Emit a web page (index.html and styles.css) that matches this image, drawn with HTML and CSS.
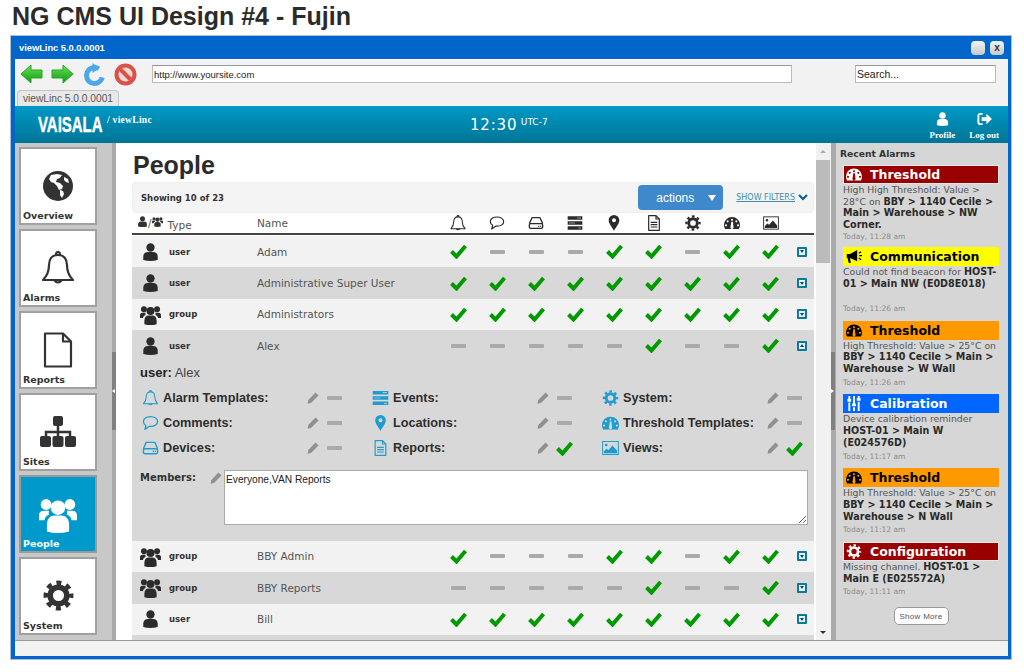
FILE: index.html
```html
<!DOCTYPE html>
<html lang="en">

<head>
    <meta charset="UTF-8" />
    <title>NG CMS UI Design #4 - Fujin</title>
    <link rel="stylesheet" href="styles.css">
</head>

<body>
    <svg class="defs" xmlns="http://www.w3.org/2000/svg">
        <symbol id="user" viewBox="0 0 20 20">
            <circle cx="10" cy="5" r="4.6" fill="currentColor" />
            <path d="M2 19v-4c0-3 2-5 5-5h6c3 0 5 2 5 5v4q-8 2-16 0z" fill="currentColor" />
        </symbol>
        <symbol id="group" viewBox="0 0 24 24">
            <g fill="currentColor">
                <circle cx="4.5" cy="6" r="3.4" />
                <circle cx="19.5" cy="6" r="3.4" />
                <path d="M0 16v-3c0-2 1-3 3-3h3.500c-.5 1-.5 2 0 2.500-2 .5-3 2-3 3.500zM24 16v-3c0-2-1-3-3-3h-3.500c.5 1 .5 2 0 2.500 2 .5 3 2 3 3.500z" />
                <circle cx="12" cy="8" r="4.6" />
                <path d="M5 23v-4c0-4 2-6 5-6h4c3 0 5 2 5 6v4q-7 2-14 0z" />
            </g>
        </symbol>
        <symbol id="bell" viewBox="0 0 32 34">
            <g fill="none" stroke="currentColor" stroke-width="2.2" stroke-linejoin="round">
                <path d="M16 4c-6 0-9 4-9 10 0 7-2 11-6 15h30c-4-4-6-8-6-15 0-6-3-10-9-10z" />
                <path d="M14 4q0-3 2-3t2 3" />
                <path d="M12 29q4 5 8 0" />
            </g>
        </symbol>
        <symbol id="comment" viewBox="0 0 24 22">
            <path d="M12 2C6 2 2 5 2 9c0 2.500 1.500 4.500 3.500 5.500L4 20l6-4.200h2c6 0 10-3 10-6.800S18 2 12 2z" fill="none" stroke="currentColor" stroke-width="1.800" stroke-linejoin="round" />
        </symbol>
        <symbol id="device" viewBox="0 0 24 22">
            <g fill="none" stroke="currentColor" stroke-width="2" stroke-linejoin="round">
                <path d="M2 12L6 3h12l4 9" />
                <rect x="2" y="12" width="20" height="7" rx="2" />
            </g>
            <path d="M15 15h2v1.500h-2zM18 15h2v1.500h-2z" fill="currentColor" />
        </symbol>
        <symbol id="events" viewBox="0 0 24 22">
            <path fill-rule="evenodd" fill="currentColor" d="M1 1h22v5H1zM15 3v1h6V3zM1 8.500h22v5H1zM3 10.500v1h9v-1zM1 16h22v5H1zM17 18v1h4v-1z" />
        </symbol>
        <symbol id="pin" viewBox="0 0 16 24">
            <path fill-rule="evenodd" fill="currentColor" d="M8 0a8 8 0 0 0-8 8c0 5 6 12 8 16 2-4 8-11 8-16a8 8 0 0 0-8-8zM8 5a3 3 0 1 1-.01 0z" />
        </symbol>
        <symbol id="doc" viewBox="0 0 20 24">
            <g fill="none" stroke="currentColor" stroke-width="1.800" stroke-linejoin="round">
                <path d="M2 1h11l5 5v17H2z" />
                <path d="M13 1v5h5" />
                <path d="M5 11h10M5 14.500h10M5 18h10" />
            </g>
        </symbol>
        <symbol id="page" viewBox="0 0 30 36">
            <g fill="none" stroke="currentColor" stroke-width="2.200" stroke-linejoin="round">
                <path d="M2 1.500h18l8 8v25H2z" />
                <path d="M20 1.500v8h8" />
            </g>
        </symbol>
        <symbol id="gear" viewBox="0 0 28 28">
            <g fill="none" stroke="currentColor">
                <circle cx="14" cy="14" r="7.500" stroke-width="5" />
                <circle cx="14" cy="14" r="11.500" stroke-width="4" stroke-dasharray="4.520 4.510" stroke-dashoffset="2.260" />
            </g>
        </symbol>
        <symbol id="gauge" viewBox="0 0 24 20">
            <path fill-rule="evenodd" fill="currentColor" d="M12 1A12 12 0 0 0 0 13c0 2 .5 4 1.500 6h21c1-2 1.500-4 1.500-6A12 12 0 0 0 12 1zM12 3.500a1.500 1.500 0 1 1-.01 0zM5.500 6a1.500 1.500 0 1 1-.01 0zM18.500 6a1.500 1.500 0 1 1-.01 0zM3 12a1.500 1.500 0 1 1-.01 0zM21 12a1.500 1.500 0 1 1-.01 0zM11 8l2.500 0 .5 7a2.400 2.400 0 1 1-4 0z" />
        </symbol>
        <symbol id="image" viewBox="0 0 26 22">
            <rect x="1" y="1" width="24" height="20" fill="none" stroke="currentColor" stroke-width="1.500" />
            <circle cx="6.500" cy="6.500" r="2" fill="currentColor" />
            <path d="M3 19v-3l4-4 3 2 6-7 7 8v4z" fill="currentColor" />
        </symbol>
        <symbol id="pencil" viewBox="0 0 12 12">
            <path d="M8.500.5l3 3-7.500 7.500-3.500.8.800-3.800z" fill="currentColor" />
        </symbol>
        <symbol id="check" viewBox="0 0 17 15">
            <path d="M1.500 7.500l5 5 9-10.500" fill="none" stroke="currentColor" stroke-width="4" />
        </symbol>
        <symbol id="globe" viewBox="0 0 30 30">
            <circle cx="15" cy="15" r="15" fill="currentColor" />
            <path fill="#fff" d="M8 4l6-1 5 1-2 3-3 1-1 3 4 1 3 3-1 3-3 1-2-4-3-3-3-1-2-3zM17 19l3 1 1 3-2 4-2-3zM21 6l4 2 1 4-3-1-2-2z" />
        </symbol>
        <symbol id="sitemap" viewBox="0 0 36 32">
            <path d="M18 8v8M6 21v-5h24v5M18 16v5" fill="none" stroke="currentColor" stroke-width="2.500" />
            <rect x="13" y="0" width="10" height="10" rx="2" fill="currentColor" />
            <rect x="0" y="20" width="11" height="11" rx="2" fill="currentColor" />
            <rect x="12.500" y="20" width="11" height="11" rx="2" fill="currentColor" />
            <rect x="25" y="20" width="11" height="11" rx="2" fill="currentColor" />
        </symbol>
        <symbol id="megaphone" viewBox="0 0 20 18">
            <path d="M1 6h4l9-5v14L5 11l1 6H3.500L2 11H1z" fill="currentColor" />
            <path d="M16 5l3-2M16.500 8H20M16 11l3 2" stroke="currentColor" stroke-width="1.500" />
        </symbol>
        <symbol id="sliders" viewBox="0 0 16 16">
            <path d="M2 0h2v3h1v3H1V3h1zM2 7h2v9H2zM7 0h2v8h1v3H6V8h1zM7 12h2v4H7zM12 0h2v2h1v3h-4V2h1zM12 6h2v10h-2z" fill="currentColor" />
        </symbol>
        <symbol id="logout" viewBox="0 0 16 14">
            <path d="M6 1.500H3.500Q1.500 1.500 1.500 3.500v7q0 2 2 2H6" fill="none" stroke="currentColor" stroke-width="2" />
            <path d="M5 5h5V1.500L16 7l-6 5.500V9H5z" fill="currentColor" />
        </symbol>
        <linearGradient id="green-grad" x1="0" y1="0" x2="0" y2="1">
            <stop offset="0" stop-color="#6fe05a" />
            <stop offset="1" stop-color="#0a9c0a" />
        </linearGradient>
        <symbol id="arrow" viewBox="0 0 23 20">
            <path d="M1 10L11 1v5h11v8H11v5z" fill="url(#green-grad)" stroke="#2aa52a" />
        </symbol>
    </svg>

    <h1 class="page-title">NG CMS UI Design #4 - Fujin</h1>

    <div class="window">
        <div class="titlebar">
            <span>viewLinc 5.0.0.0001</span>
            <div class="win-buttons">
                <button class="win-btn"></button>
                <button class="win-btn">x</button>
            </div>
        </div>

        <div class="toolbar">
            <div class="nav-row">
                <svg class="nav-icon back"><use href="#arrow" /></svg>
                <svg class="nav-icon forward"><use href="#arrow" /></svg>
                <svg class="nav-round refresh" viewBox="0 0 22 23">
                    <circle cx="11" cy="12.500" r="8" fill="none" stroke="#4aa8ea" stroke-width="5" stroke-dasharray="40 11" stroke-dashoffset="-2" />
                    <path d="M9 0v10l7-5z" fill="#4aa8ea" />
                </svg>
                <svg class="nav-round stop" viewBox="0 0 23 23">
                    <circle cx="11.500" cy="11.500" r="11" fill="#d8524a" />
                    <circle cx="11.500" cy="11.500" r="7" fill="#f0d8d4" />
                    <path d="M6.500 6.500l10 10" stroke="#d8524a" stroke-width="4" />
                </svg>
                <input class="address" type="text" value="http://www.yoursite.com">
                <input class="search" type="text" value="Search...">
            </div>
            <div class="tab">viewLinc 5.0.0.0001</div>
        </div>

        <header class="app-header">
            <div class="brand">
                <span class="logo">VAISALA</span>
                <span class="product">/ viewLinc</span>
            </div>
            <div class="clock">12:30 <sup>UTC-7</sup></div>
            <div class="header-links">
                <a class="header-link"><svg><use href="#user" /></svg>Profile</a>
                <a class="header-link"><svg><use href="#logout" /></svg>Log out</a>
            </div>
        </header>

        <div class="app-body">
            <nav class="sidebar">
                <a class="nav-btn"><span class="nav-art"><svg class="ic-globe"><use href="#globe" /></svg></span>Overview</a>
                <a class="nav-btn"><span class="nav-art"><svg class="ic-bell"><use href="#bell" /></svg></span>Alarms</a>
                <a class="nav-btn"><span class="nav-art"><svg class="ic-doc"><use href="#page" /></svg></span>Reports</a>
                <a class="nav-btn"><span class="nav-art"><svg class="ic-sitemap"><use href="#sitemap" /></svg></span>Sites</a>
                <a class="nav-btn active"><span class="nav-art"><svg class="ic-people"><use href="#group" /></svg></span>People</a>
                <a class="nav-btn"><span class="nav-art"><svg class="ic-gear"><use href="#gear" /></svg></span>System</a>
            </nav>

            <div class="splitter"><i class="grip"></i></div>

            <main class="main">
                <h2 class="heading">People</h2>
                <div class="filter-bar">
                    <span class="count">Showing 10 of 23</span>
                    <button class="actions">actions<i class="caret"></i></button>
                    <a class="show-filters">SHOW FILTERS</a>
                    <svg class="chevron" viewBox="0 0 10 7"><path d="M1 1l4 4 4-4" fill="none" stroke="currentColor" stroke-width="2" /></svg>
                </div>

                <div class="row head">
                    <div class="type-head">
                        <svg class="mini"><use href="#user" /></svg>/<svg class="mini"><use href="#group" /></svg>
                        <span>Type</span>
                    </div>
                    <div class="name">Name</div>
                    <svg class="hi"><use href="#bell" /></svg>
                    <svg class="hi"><use href="#comment" /></svg>
                    <svg class="hi"><use href="#device" /></svg>
                    <svg class="hi"><use href="#events" /></svg>
                    <svg class="hi"><use href="#pin" /></svg>
                    <svg class="hi"><use href="#doc" /></svg>
                    <svg class="hi"><use href="#gear" /></svg>
                    <svg class="hi"><use href="#gauge" /></svg>
                    <svg class="hi"><use href="#image" /></svg>
                </div>

                <div class="row">
                    <svg class="kind"><use href="#user" /></svg><b>user</b><div class="name">Adam</div>
                    <svg class="ck"><use href="#check" /></svg><i class="dash"></i><i class="dash"></i><i class="dash"></i><svg class="ck"><use href="#check" /></svg><svg class="ck"><use href="#check" /></svg><i class="dash"></i><svg class="ck"><use href="#check" /></svg><svg class="ck"><use href="#check" /></svg>
                    <i class="toggle"></i>
                </div>
                <div class="row alt">
                    <svg class="kind"><use href="#user" /></svg><b>user</b><div class="name">Administrative Super User</div>
                    <svg class="ck"><use href="#check" /></svg><svg class="ck"><use href="#check" /></svg><svg class="ck"><use href="#check" /></svg><svg class="ck"><use href="#check" /></svg><svg class="ck"><use href="#check" /></svg><svg class="ck"><use href="#check" /></svg><svg class="ck"><use href="#check" /></svg><svg class="ck"><use href="#check" /></svg><svg class="ck"><use href="#check" /></svg>
                    <i class="toggle"></i>
                </div>
                <div class="row">
                    <svg class="kind many"><use href="#group" /></svg><b>group</b><div class="name">Administrators</div>
                    <svg class="ck"><use href="#check" /></svg><svg class="ck"><use href="#check" /></svg><svg class="ck"><use href="#check" /></svg><svg class="ck"><use href="#check" /></svg><svg class="ck"><use href="#check" /></svg><svg class="ck"><use href="#check" /></svg><svg class="ck"><use href="#check" /></svg><svg class="ck"><use href="#check" /></svg><svg class="ck"><use href="#check" /></svg>
                    <i class="toggle"></i>
                </div>

                <div class="expanded">
                    <div class="row alt">
                        <svg class="kind"><use href="#user" /></svg><b>user</b><div class="name">Alex</div>
                        <i class="dash"></i><i class="dash"></i><i class="dash"></i><i class="dash"></i><i class="dash"></i><svg class="ck"><use href="#check" /></svg><i class="dash"></i><i class="dash"></i><svg class="ck"><use href="#check" /></svg>
                        <i class="toggle open"></i>
                    </div>
                    <div class="detail-title"><b>user:</b> Alex</div>
                    <div class="perms">
                        <div class="perm"><svg><use href="#bell" /></svg><b>Alarm Templates:</b><svg class="pen"><use href="#pencil" /></svg><i class="dash"></i></div>
                        <div class="perm"><svg><use href="#events" /></svg><b>Events:</b><svg class="pen"><use href="#pencil" /></svg><i class="dash"></i></div>
                        <div class="perm"><svg><use href="#gear" /></svg><b>System:</b><svg class="pen"><use href="#pencil" /></svg><i class="dash"></i></div>
                        <div class="perm"><svg><use href="#comment" /></svg><b>Comments:</b><svg class="pen"><use href="#pencil" /></svg><i class="dash"></i></div>
                        <div class="perm"><svg><use href="#pin" /></svg><b>Locations:</b><svg class="pen"><use href="#pencil" /></svg><i class="dash"></i></div>
                        <div class="perm"><svg><use href="#gauge" /></svg><b>Threshold Templates:</b><svg class="pen"><use href="#pencil" /></svg><i class="dash"></i></div>
                        <div class="perm"><svg><use href="#device" /></svg><b>Devices:</b><svg class="pen"><use href="#pencil" /></svg><i class="dash"></i></div>
                        <div class="perm"><svg><use href="#doc" /></svg><b>Reports:</b><svg class="pen"><use href="#pencil" /></svg><svg class="ck"><use href="#check" /></svg></div>
                        <div class="perm"><svg><use href="#image" /></svg><b>Views:</b><svg class="pen"><use href="#pencil" /></svg><svg class="ck"><use href="#check" /></svg></div>
                    </div>
                    <div class="members">
                        <label>Members:</label>
                        <svg class="pen"><use href="#pencil" /></svg>
                        <textarea>Everyone,VAN Reports</textarea>
                    </div>
                </div>

                <div class="row">
                    <svg class="kind many"><use href="#group" /></svg><b>group</b><div class="name">BBY Admin</div>
                    <svg class="ck"><use href="#check" /></svg><i class="dash"></i><i class="dash"></i><i class="dash"></i><svg class="ck"><use href="#check" /></svg><svg class="ck"><use href="#check" /></svg><i class="dash"></i><svg class="ck"><use href="#check" /></svg><svg class="ck"><use href="#check" /></svg>
                    <i class="toggle"></i>
                </div>
                <div class="row alt">
                    <svg class="kind many"><use href="#group" /></svg><b>group</b><div class="name">BBY Reports</div>
                    <i class="dash"></i><i class="dash"></i><i class="dash"></i><i class="dash"></i><i class="dash"></i><svg class="ck"><use href="#check" /></svg><i class="dash"></i><i class="dash"></i><svg class="ck"><use href="#check" /></svg>
                    <i class="toggle"></i>
                </div>
                <div class="row">
                    <svg class="kind"><use href="#user" /></svg><b>user</b><div class="name">Bill</div>
                    <svg class="ck"><use href="#check" /></svg><svg class="ck"><use href="#check" /></svg><svg class="ck"><use href="#check" /></svg><svg class="ck"><use href="#check" /></svg><svg class="ck"><use href="#check" /></svg><svg class="ck"><use href="#check" /></svg><svg class="ck"><use href="#check" /></svg><svg class="ck"><use href="#check" /></svg><svg class="ck"><use href="#check" /></svg>
                    <i class="toggle"></i>
                </div>
                <div class="row alt"></div>
            </main>

            <div class="scrollbar">
                <i class="scroll-up"></i>
                <i class="scroll-thumb"></i>
                <i class="scroll-down"></i>
            </div>

            <div class="splitter right"><i class="grip"></i></div>

            <aside class="alarms">
                <h3>Recent Alarms</h3>

                <div class="alarm first">
                    <div class="alarm-head red"><svg><use href="#gauge" /></svg>Threshold</div>
                    <p>High High Threshold: Value &gt; 28°C on <b>BBY &gt; 1140 Cecile &gt; Main &gt; Warehouse &gt; NW Corner.</b></p>
                    <time>Today, 11:28 am</time>
                </div>
                <div class="alarm">
                    <div class="alarm-head yellow"><svg><use href="#megaphone" /></svg>Communication</div>
                    <p>Could not find beacon for <b>HOST-01 &gt; Main NW (E0D8E018)</b><br>&nbsp;</p>
                    <time>Today, 11:26 am</time>
                </div>
                <div class="alarm">
                    <div class="alarm-head orange"><svg><use href="#gauge" /></svg>Threshold</div>
                    <p>High Threshold: Value &gt; 25°C on <b>BBY &gt; 1140 Cecile &gt; Main &gt; Warehouse &gt; W Wall</b></p>
                    <time>Today, 11:26 am</time>
                </div>
                <div class="alarm">
                    <div class="alarm-head blue"><svg><use href="#sliders" /></svg>Calibration</div>
                    <p>Device calibration reminder <b>HOST-01 &gt; Main W (E024576D)</b></p>
                    <time>Today, 11:17 am</time>
                </div>
                <div class="alarm">
                    <div class="alarm-head orange"><svg><use href="#gauge" /></svg>Threshold</div>
                    <p>High Threshold: Value &gt; 25°C on <b>BBY &gt; 1140 Cecile &gt; Main &gt; Warehouse &gt; N Wall</b></p>
                    <time>Today, 11:12 am</time>
                </div>
                <div class="alarm">
                    <div class="alarm-head red"><svg><use href="#gear" /></svg>Configuration</div>
                    <p>Missing channel. <b>HOST-01 &gt; Main E (E025572A)</b></p>
                    <time>Today, 11:11 am</time>
                </div>

                <button class="show-more">Show More</button>
            </aside>
        </div>

        <div class="statusbar"></div>
    </div>
</body>

</html>
```

FILE: styles.css
```css
* {
    box-sizing: border-box;
}

html,
body {
    margin: 0;
    height: 672px;
    overflow: hidden;
    background-color: #FFFFFF;
    color: #333333;
    font-family: 'DejaVu Sans', sans-serif;
}

.defs {
    position: absolute;
    width: 0;
    height: 0;
}

svg {
    display: block;
}

i {
    display: block;
}

.page-title {
    margin: 0;
    height: 36px;
    padding: 1px 0 0 12px;
    font: bold 25px/30px 'Liberation Sans', sans-serif;
    color: #2b2b2b;
}

/* browser window */

.window {
    display: flex;
    flex-direction: column;
    width: 1000px;
    height: 623px;
    margin-left: 11px;
    background-color: #F2F2F2;
    border-style: solid;
    border-color: #0066CC;
    border-width: 0 3px 3px 4px;
    box-shadow: 0 0 0 1px #b0bfd0;
}

.titlebar {
    display: flex;
    align-items: center;
    justify-content: space-between;
    flex: none;
    height: 23px;
    padding: 0 4px 0 4px;
    background-color: #0066CC;
    color: #FFFFFF;
    font: bold 9.3px 'Liberation Sans', sans-serif;
}

.win-buttons {
    display: flex;
    gap: 5px;
}

.win-btn {
    width: 14px;
    height: 14px;
    padding: 0;
    border: 0;
    border-radius: 4px;
    background: linear-gradient(#f4f4f4, #c8c8c8);
    color: #333;
    font: bold 10px/13px 'Liberation Sans', sans-serif;
}

.toolbar {
    flex: none;
    height: 47px;
    border-bottom: 1px solid #FFFFFF;
    border-top: 1px solid #FFFFFF;
}

.nav-row {
    display: flex;
    align-items: center;
    height: 30px;
    padding: 0 12px 2px 5px;
}

.nav-icon {
    width: 23px;
    height: 20px;
}

.back {
    margin-right: 8px;
}

.forward {
    transform: scaleX(-1);
    margin-right: 9px;
}

.nav-round {
    width: 23px;
    height: 23px;
    margin-right: 8px;
}

.address,
.search {
    height: 18px;
    padding: 0 1px;
    border: 1px solid #BBBBBB;
    border-top-color: #999999;
    background-color: #FFFFFF;
    color: #222222;
    font: 10.5px 'Liberation Sans', sans-serif;
}

.address {
    width: 640px;
    margin-left: 7px;
    font-size: 9.5px;
}

.search {
    width: 141px;
    margin-left: auto;
}

.tab {
    width: 102px;
    height: 16px;
    margin: 0 0 0 2px;
    border: 1px solid #C4C4C4;
    border-bottom: 0;
    border-radius: 4px 4px 0 0;
    background-color: #E8E8E8;
    color: #555555;
    font: 10.2px/15px 'Liberation Sans', sans-serif;
    text-align: center;
}

/* teal header */

.app-header {
    display: flex;
    flex: none;
    height: 37px;
    background: linear-gradient(#0099C6, #007596);
    color: #FFFFFF;
}

.brand {
    display: flex;
    width: 400px;
}

.logo {
    display: block;
    margin: 8px 0 0 23px;
    width: 65px;
    font: bold 22px/22px 'Liberation Sans', sans-serif;
    -webkit-text-stroke: .4px #FFFFFF;
    transform: scaleX(.68);
    transform-origin: left;
    white-space: nowrap;
}

.product {
    margin: 8px 0 0 4px;
    font: bold 9.5px/12px 'Liberation Serif', serif;
    letter-spacing: .3px;
}

.clock {
    margin: 10px 0 0 55px;
    font-size: 15px;
    line-height: 18px;
    letter-spacing: .8px;
    white-space: nowrap;
}

.clock sup {
    margin-left: -2px;
    font-size: 9px;
    letter-spacing: 0;
    vertical-align: 5px;
    line-height: 0;
}

.header-links {
    display: flex;
    margin-left: auto;
    padding-right: 9px;
    gap: 14px;
}

.header-link {
    display: flex;
    flex-direction: column;
    align-items: center;
    padding-top: 6px;
    font: bold 9px/12px 'Liberation Serif', serif;
}

.header-link svg {
    width: 15px;
    height: 14px;
    margin-bottom: 3px;
}

/* main three panes */

.app-body {
    display: flex;
    flex: 1;
    min-height: 0;
    overflow: hidden;
}

.sidebar {
    flex: none;
    display: flex;
    flex-direction: column;
    gap: 4px;
    width: 97px;
    padding: 4px 0 0 4px;
    background-color: #C8C8C8;
}

.nav-btn {
    display: flex;
    flex-direction: column;
    flex: none;
    width: 78px;
    height: 78px;
    padding: 12px 2px 1px;
    border: 2px solid #A0A0A0;
    background-color: #FFFFFF;
    font-size: 9.5px;
    font-weight: bold;
    line-height: 12px;
    color: #333333;
}

.nav-btn.active {
    background-color: #0099CC;
    color: #FFFFFF;
    border-color: #9a9a9a;
}

.nav-art {
    display: flex;
    flex: 1;
    align-items: center;
    justify-content: center;
}

.ic-globe {
    width: 30px;
    height: 30px;
}

.ic-bell {
    width: 32px;
    height: 34px;
}

.ic-doc {
    width: 30px;
    height: 36px;
}

.ic-sitemap {
    width: 36px;
    height: 32px;
}

.ic-people {
    width: 38px;
    height: 38px;
}

.ic-gear {
    width: 31px;
    height: 31px;
}

.splitter {
    position: relative;
    flex: none;
    width: 4px;
    background-color: #AAAAAA;
}

.grip {
    position: absolute;
    top: 209px;
    left: 0;
    width: 4px;
    height: 78px;
    background-color: #808080;
}

.grip::after {
    content: "";
    position: absolute;
    top: 37px;
    left: 0;
    border-style: solid;
    border-width: 2px 3px 2px 0;
    border-color: transparent #FFFFFF transparent transparent;
}

.splitter.right {
    width: 5px;
    margin-left: 1px;
}

.splitter.right .grip::after {
    border-width: 2px 0 2px 3px;
    border-color: transparent transparent transparent #FFFFFF;
}

.main {
    flex: none;
    width: 700px;
    height: 497px;
    overflow: hidden;
    padding: 0 2px 0 16px;
    background-color: #FFFFFF;
}

.heading {
    margin: 0;
    height: 39px;
    padding: 7px 0 0 1px;
    font: bold 25px/30px 'Liberation Sans', sans-serif;
    color: #2b2b2b;
}

.filter-bar {
    display: flex;
    align-items: center;
    height: 31px;
    padding: 0 5px 0 8px;
    background-color: #F4F4F4;
    border: 1px solid #EEEEEE;
    border-radius: 4px;
}

.count {
    font-size: 8.5px;
    font-weight: bold;
}

.actions {
    display: flex;
    align-items: center;
    justify-content: space-between;
    width: 85px;
    height: 25px;
    margin-left: auto;
    padding: 0 7px 0 18px;
    border: 0;
    border-radius: 4px;
    background-color: #4088CC;
    color: #FFFFFF;
    font: 12px 'Liberation Sans', sans-serif;
}

.caret {
    width: 0;
    height: 0;
    border-style: solid;
    border-width: 6px 4.5px 0;
    border-color: #FFFFFF transparent transparent;
}

.show-filters {
    margin-left: 13px;
    color: #3F8FA8;
    font-size: 8px;
    text-decoration: underline;
    white-space: nowrap;
}

.chevron {
    width: 10px;
    height: 7px;
    margin-left: 3px;
    color: #005F86;
}

/* table */

.row {
    display: grid;
    grid-template-columns: 37px 88px 181.5px repeat(9, 39.1px) 1fr;
    align-items: center;
    justify-items: center;
    height: 31.4px;
    background-color: #F2F2F2;
    font-size: 10.5px;
}

.row.alt {
    background-color: #D8D8D8;
}

.row b {
    justify-self: start;
    font-size: 8.500px;
}

.name {
    justify-self: start;
    color: #555555;
    white-space: nowrap;
}

.row.head {
    height: 22px;
    margin: 0 0 1px;
    background-color: #FFFFFF;
    border-bottom: 2px solid #444444;
}

.type-head {
    display: flex;
    align-items: center;
    grid-column: span 2;
    justify-self: start;
    padding-left: 5px;
    color: #555555;
}

.type-head span {
    margin: 3px 0 0 5px;
}

.mini {
    width: 11px;
    height: 11px;
    margin-top: -4px;
    color: #333333;
}

.hi {
    width: 16px;
    height: 16px;
    color: #2b2b2b;
}

.kind {
    width: 19px;
    height: 18px;
    color: #2b2b2b;
}

.kind.many {
    width: 21px;
    height: 21px;
}

.ck {
    width: 17px;
    height: 15px;
    color: #009900;
}

.dash {
    width: 15px;
    height: 4px;
    border-radius: 1px;
    background-color: #AAAAAA;
}

.toggle {
    position: relative;
    width: 10px;
    height: 10px;
    border: 2px solid #0A7A9C;
    border-radius: 1px;
    background-color: #EAF4F8;
}

.toggle::after {
    content: "";
    position: absolute;
    left: 1px;
    top: 1.500px;
    border-style: solid;
    border-width: 3px 2px 0;
    border-color: #004F66 transparent transparent;
}

.toggle.open::after {
    border-width: 0 2px 3px;
    border-color: transparent transparent #004F66;
}

.expanded {
    height: 210.6px;
    background-color: #D8D8D8;
}

.detail-title {
    height: 24px;
    padding: 3px 0 0 8px;
    font: 13px/16px 'Liberation Sans', sans-serif;
    color: #444444;
}

.detail-title b {
    color: #222222;
}

.perms {
    display: grid;
    grid-template-columns: repeat(3, 205px);
    column-gap: 25px;
    padding-left: 9px;
}

.perm {
    display: grid;
    grid-template-columns: 22px 1fr 20px 23px;
    align-items: center;
    justify-items: center;
    height: 25px;
    font: 12.7px 'Liberation Sans', sans-serif;
    color: #2e2e2e;
}

.perm b {
    justify-self: start;
    white-space: nowrap;
}

.perm svg:first-child {
    justify-self: start;
    width: 17px;
    height: 16px;
    margin-left: 1px;
    color: #1E9BD0;
}

.pen {
    width: 12px;
    height: 12px;
    color: #909090;
}

.members {
    display: flex;
    align-items: flex-start;
    padding: 9px 0 0 8px;
}

.members label {
    width: 70px;
    margin-top: 1px;
    font: bold 10px/13px 'DejaVu Sans', sans-serif;
}

.members .pen {
    margin: 2px 2px 0 0;
}

.members textarea {
    width: 584px;
    height: 55px;
    padding: 3px 1px;
    border: 1px solid #AAAAAA;
    border-radius: 0;
    background-color: #FFFFFF;
    font: 10.2px 'Liberation Sans', sans-serif;
    color: #222222;
    outline: 0;
}

/* scrollbar */

.scrollbar {
    display: flex;
    flex: none;
    flex-direction: column;
    align-items: center;
    width: 14px;
    background-color: #F1F1F1;
}

.scroll-up,
.scroll-down {
    flex: none;
    width: 0;
    height: 0;
    margin-top: 7px;
    border-style: solid;
    border-width: 0 3px 3px;
    border-color: transparent transparent #AAAAAA;
}

.scroll-down {
    margin-top: auto;
    margin-bottom: 6px;
    border-width: 3px 3px 0;
    border-color: #333333 transparent transparent;
}

.scroll-thumb {
    width: 14px;
    height: 103px;
    margin-top: 7px;
    background-color: #BBBBBB;
}

/* alarms */

.alarms {
    flex: 1;
    min-width: 0;
    padding: 4px 9px 0 7px;
    background-color: #D6D6D6;
}

.alarms h3 {
    margin: 0 0 5px -3px;
    height: 13px;
    font-size: 9.2px;
    line-height: 13px;
    font-weight: bold;
    color: #333333;
}

.alarm {
    margin-bottom: 6.7px;
}

.alarm.first {
    margin-bottom: 5px;
}

.alarm-head {
    display: flex;
    align-items: center;
    height: 19px;
    padding-left: 3px;
    font-size: 12.5px;
    font-weight: bold;
    outline: 1px solid #E8E8E8;
    outline-offset: -1px;
}

.alarm-head svg {
    width: 16px;
    height: 15px;
    margin-right: 8px;
}

.alarm-head.red {
    background-color: #990000;
    color: #FFFFFF;
}

.alarm-head.yellow {
    background-color: #FFFF00;
    color: #000000;
    outline: 0;
}

.alarm-head.orange {
    background-color: #FF9900;
    color: #000000;
    outline: 0;
}

.alarm-head.blue {
    background-color: #0066FF;
    color: #FFFFFF;
    outline: 0;
}

.alarm p {
    margin: 0;
    font-size: 9.3px;
    line-height: 11.7px;
    color: #555555;
}

.alarm p b {
    font-size: 9.6px;
    line-height: 11px;
    color: #2b2b2b;
}

.alarm time {
    display: block;
    margin-top: 2px;
    font-size: 7.5px;
    line-height: 11px;
    color: #8C8C8C;
}

.alarm.first time {
    margin-top: 0;
}

.show-more {
    display: block;
    width: 55px;
    height: 18px;
    margin: 10px auto 0;
    padding: 0;
    border: 1px solid #999999;
    border-radius: 5px;
    background-color: #FFFFFF;
    color: #555555;
    font-size: 8px;
    letter-spacing: .3px;
}

.statusbar {
    flex: none;
    height: 16px;
    background-color: #F2F2F2;
    border-top: 1px solid #999999;
}
```
